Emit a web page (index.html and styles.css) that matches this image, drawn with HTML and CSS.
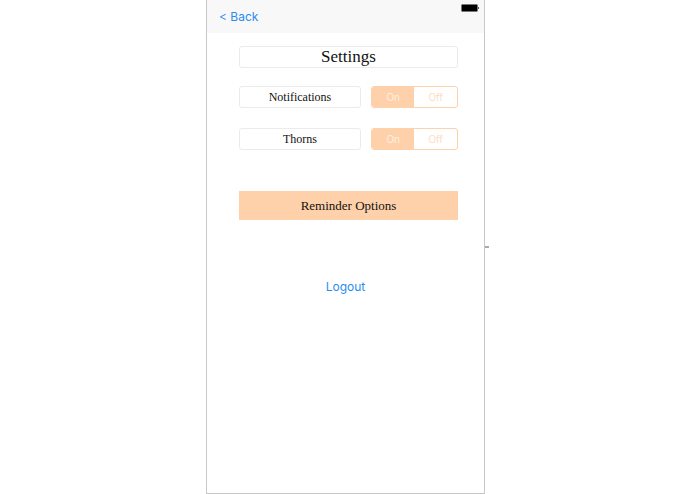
FILE: index.html
```html
<!DOCTYPE html>
<html lang="en">
<head>
<meta charset="UTF-8">
<meta name="viewport" content="width=device-width, initial-scale=1.0">
<title>Settings</title>
<link rel="stylesheet" href="styles.css">
</head>
<body>
<div class="phone">
    <header class="topbar">
        <a class="link" href="#">&lt; Back</a>
        <svg class="battery" width="19" height="8" viewBox="0 0 19 8" aria-hidden="true">
            <rect x="0.5" y="0.5" width="16" height="7" rx="1" fill="#000" stroke="#777"/>
            <rect x="17" y="3" width="1" height="2" fill="#555"/>
        </svg>
    </header>
    <main class="content">
        <h1 class="box title">Settings</h1>
        <div class="setting" role="radiogroup" aria-labelledby="notifications">
            <span class="box" id="notifications">Notifications</span>
            <div class="toggle">
                <label><input type="radio" name="notifications" checked><span>On</span></label>
                <label><input type="radio" name="notifications"><span>Off</span></label>
            </div>
        </div>
        <div class="setting" role="radiogroup" aria-labelledby="thorns">
            <span class="box" id="thorns">Thorns</span>
            <div class="toggle">
                <label><input type="radio" name="thorns" checked><span>On</span></label>
                <label><input type="radio" name="thorns"><span>Off</span></label>
            </div>
        </div>
        <button class="reminder" type="button">Reminder Options</button>
    </main>
    <footer class="account">
        <a class="link" href="#">Logout</a>
    </footer>
</div>
<div class="handle"></div>
</body>
</html>
```
FILE: styles.css
```css
* {
    box-sizing: border-box;
}
body {
    display: flex;
    justify-content: center;
    margin: 0;
    background-color: #fff;
    font-family: "Liberation Serif", serif;
    color: #111;
}
.phone {
    width: 40%;
    min-width: 279px;
    min-height: 100vh;
    border: 1px solid #c8c8c8;
    border-top: none;
}
.topbar {
    display: flex;
    justify-content: space-between;
    height: 33px;
    padding: 4px 4px 0 12px;
    background-color: #f8f8f8;
}
.link {
    font-family: Inter, sans-serif;
    font-size: 12px;
    line-height: 25px;
    color: #2b8cf0;
    text-decoration: none;
}
.content {
    display: flex;
    flex-direction: column;
    padding: 13px 26px 0 32px;
}
.box {
    display: flex;
    align-items: center;
    justify-content: center;
    height: 22px;
    border: 1px solid #ebebeb;
    border-radius: 3px;
    font-size: 12px;
}
.title {
    margin: 0 0 18px;
    font-size: 17px;
    font-weight: normal;
}
.setting {
    display: grid;
    grid-template-columns: 7fr 5fr;
    gap: 10px;
    margin-bottom: 20px;
}
.toggle {
    display: flex;
    height: 22px;
    border: 1px solid #fed1ab;
    border-radius: 3px;
    overflow: hidden;
}
.toggle label {
    flex: 1;
    cursor: pointer;
}
.toggle input {
    position: absolute;
    opacity: 0;
}
.toggle span {
    display: block;
    font-family: Inter, sans-serif;
    font-size: 10px;
    line-height: 20px;
    text-align: center;
    color: #fddcc3;
}
.toggle input:checked + span {
    background-color: #fed1ab;
    color: #fff0e3;
}
.reminder {
    height: 29px;
    margin-top: 21px;
    border: none;
    background-color: #fed1ab;
    font-family: inherit;
    font-size: 13px;
    color: #111;
    cursor: pointer;
}
.account {
    margin-top: 54px;
    text-align: center;
}
/* small grip on the right edge of the frame */
.handle {
    align-self: center;
    width: 4px;
    height: 2px;
    background-color: #aaa;
}
```
